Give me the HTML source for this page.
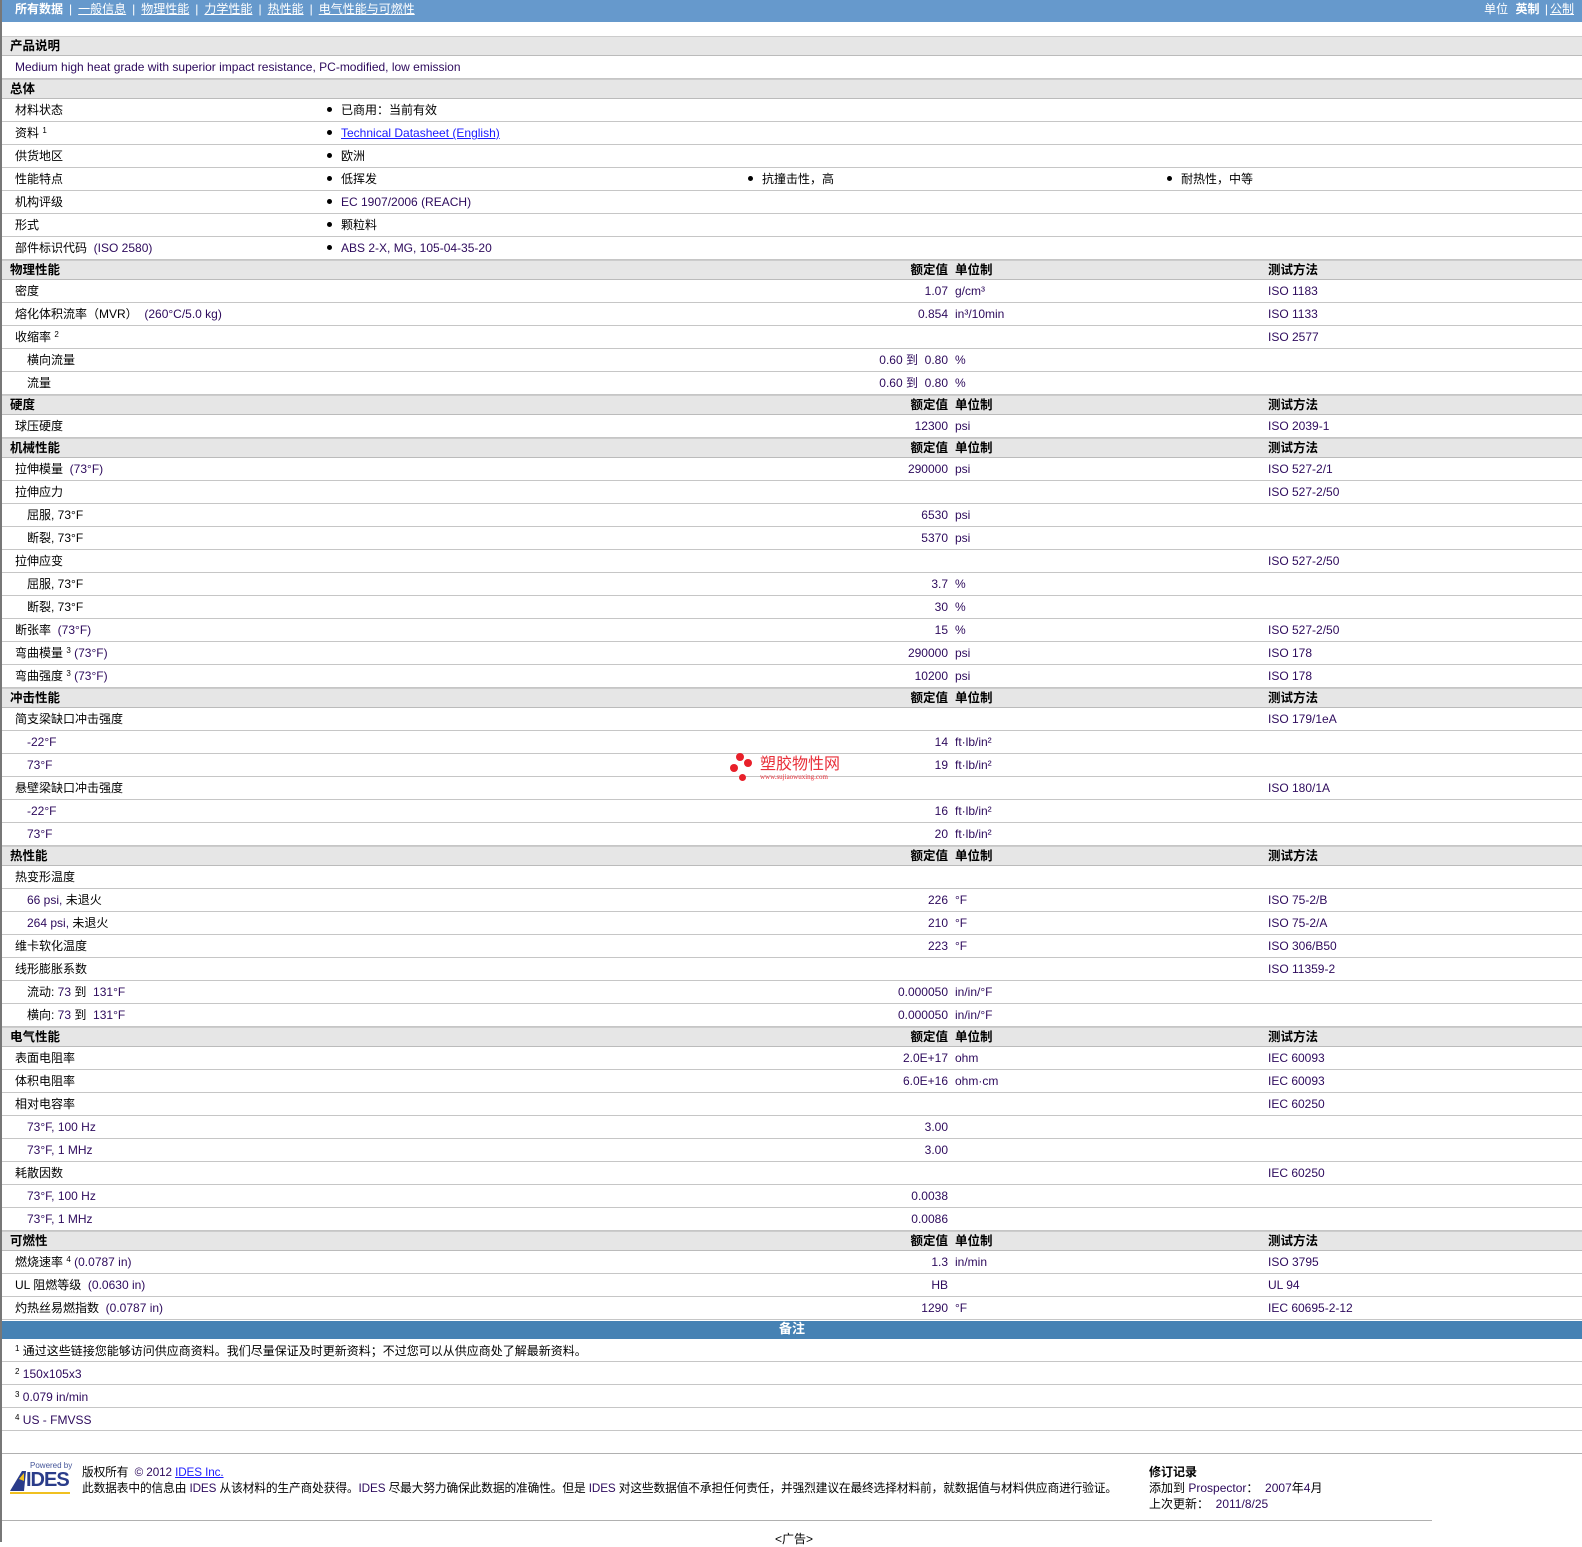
<!DOCTYPE html>
<html><head><meta charset="utf-8"><style>
*{margin:0;padding:0;box-sizing:border-box}
body{width:1582px;height:1542px;overflow:hidden;background:#fff;font-family:"Liberation Sans","Noto Sans CJK SC",sans-serif;font-size:12px;color:#000;position:relative}
#page{position:absolute;left:0;top:0;width:1582px;height:1542px;border-left:2px solid #777}
.top{height:22px;background:#6699cc;color:#fff;position:relative;line-height:19px;white-space:nowrap}
.top a{color:#fff;text-decoration:underline}
.top .sep{margin:0 6px}
.rows{position:absolute;top:36px;left:0;width:1580px}
.r,.h{position:relative;border-bottom:1px solid #c6c6c6;white-space:nowrap}
.r{height:23px}
.h{height:20px;background:#e6e6e6;font-weight:bold;border-top:1px solid #ccc;border-bottom:1px solid #bbb;font-size:12.5px}
.r>span,.h>span{position:absolute;top:4px;line-height:15px}
.h>span{top:2px}
.l{left:13px}.s{left:25px}
.hl{left:8px}
.v{left:700px;width:246px;text-align:right}
.u{left:953px}
.m{left:1266px}
.b1{left:325px}.b2{left:746px}.b3{left:1165px}
.dot{display:inline-block;width:5px;height:5px;border-radius:50%;background:#000;vertical-align:middle;margin-right:9px;position:relative;top:-1px}
.p{color:#2d0a5c}
sup{font-size:8px;vertical-align:top;position:relative;top:-3px}
.note{position:absolute;left:0;top:1321px;width:1580px;height:18px;background:#4682b4;color:#fff;font-weight:bold;text-align:center;line-height:15px;font-size:13px}
.nr{position:absolute;left:0;width:1580px;height:23px;border-bottom:1px solid #c6c6c6}
.nr>span{position:absolute;left:13px;top:5px;line-height:15px;white-space:nowrap}
a.lk{color:#1a1aff;text-decoration:underline}
</style></head><body><div id="page">
<div class="top">
<span style="position:absolute;left:13px"><b>所有数据</b><span class="sep">|</span><a>一般信息</a><span class="sep">|</span><a>物理性能</a><span class="sep">|</span><a>力学性能</a><span class="sep">|</span><a>热性能</a><span class="sep">|</span><a>电气性能与可燃性</a></span>
<span style="position:absolute;right:8px">单位 <b style="margin-left:4px">英制</b> <span style="margin:0 2px">|</span><a>公制</a></span>
</div>
<div class="rows">
<div class="h"><span class="hl">产品说明</span></div>
<div class="r"><span class="l p">Medium high heat grade with superior impact resistance, PC-modified, low emission</span></div>
<div class="h"><span class="hl">总体</span></div>
<div class="r"><span class="l">材料状态</span><span class="b1"><i class="dot"></i>已商用：当前有效</span></div>
<div class="r"><span class="l">资料 <sup>1</sup></span><span class="b1"><i class="dot"></i><a class="lk">Technical Datasheet (English)</a></span></div>
<div class="r"><span class="l">供货地区</span><span class="b1"><i class="dot"></i>欧洲</span></div>
<div class="r"><span class="l">性能特点</span><span class="b1"><i class="dot"></i>低挥发</span><span class="b2"><i class="dot"></i>抗撞击性，高</span><span class="b3"><i class="dot"></i>耐热性，中等</span></div>
<div class="r"><span class="l">机构评级</span><span class="b1 p"><i class="dot"></i>EC 1907/2006 (REACH)</span></div>
<div class="r"><span class="l">形式</span><span class="b1"><i class="dot"></i>颗粒料</span></div>
<div class="r"><span class="l">部件标识代码 <span class="p">&nbsp;(ISO 2580)</span></span><span class="b1 p"><i class="dot"></i>ABS 2-X, MG, 105-04-35-20</span></div>
<div class="h"><span class="hl">物理性能</span><span class="v">额定值</span><span class="u">单位制</span><span class="m">测试方法</span></div>
<div class="r"><span class="l">密度</span><span class="v p">1.07</span><span class="u p">g/cm³</span><span class="m p">ISO 1183</span></div>
<div class="r"><span class="l">熔化体积流率（MVR） <span class="p">&nbsp;(260°C/5.0 kg)</span></span><span class="v p">0.854</span><span class="u p">in³/10min</span><span class="m p">ISO 1133</span></div>
<div class="r"><span class="l">收缩率 <sup>2</sup></span><span class="m p">ISO 2577</span></div>
<div class="r"><span class="s">横向流量</span><span class="v p">0.60 到&nbsp; 0.80</span><span class="u p">%</span></div>
<div class="r"><span class="s">流量</span><span class="v p">0.60 到&nbsp; 0.80</span><span class="u p">%</span></div>
<div class="h"><span class="hl">硬度</span><span class="v">额定值</span><span class="u">单位制</span><span class="m">测试方法</span></div>
<div class="r"><span class="l">球压硬度</span><span class="v p">12300</span><span class="u p">psi</span><span class="m p">ISO 2039-1</span></div>
<div class="h"><span class="hl">机械性能</span><span class="v">额定值</span><span class="u">单位制</span><span class="m">测试方法</span></div>
<div class="r"><span class="l">拉伸模量 <span class="p">&nbsp;(73°F)</span></span><span class="v p">290000</span><span class="u p">psi</span><span class="m p">ISO 527-2/1</span></div>
<div class="r"><span class="l">拉伸应力</span><span class="m p">ISO 527-2/50</span></div>
<div class="r"><span class="s">屈服, 73°F</span><span class="v p">6530</span><span class="u p">psi</span></div>
<div class="r"><span class="s">断裂, 73°F</span><span class="v p">5370</span><span class="u p">psi</span></div>
<div class="r"><span class="l">拉伸应变</span><span class="m p">ISO 527-2/50</span></div>
<div class="r"><span class="s">屈服, 73°F</span><span class="v p">3.7</span><span class="u p">%</span></div>
<div class="r"><span class="s">断裂, 73°F</span><span class="v p">30</span><span class="u p">%</span></div>
<div class="r"><span class="l">断张率 <span class="p">&nbsp;(73°F)</span></span><span class="v p">15</span><span class="u p">%</span><span class="m p">ISO 527-2/50</span></div>
<div class="r"><span class="l">弯曲模量 <sup>3</sup> <span class="p">(73°F)</span></span><span class="v p">290000</span><span class="u p">psi</span><span class="m p">ISO 178</span></div>
<div class="r"><span class="l">弯曲强度 <sup>3</sup> <span class="p">(73°F)</span></span><span class="v p">10200</span><span class="u p">psi</span><span class="m p">ISO 178</span></div>
<div class="h"><span class="hl">冲击性能</span><span class="v">额定值</span><span class="u">单位制</span><span class="m">测试方法</span></div>
<div class="r"><span class="l">简支梁缺口冲击强度</span><span class="m p">ISO 179/1eA</span></div>
<div class="r"><span class="s p">-22°F</span><span class="v p">14</span><span class="u p">ft·lb/in²</span></div>
<div class="r"><span class="s p">73°F</span><span class="v p">19</span><span class="u p">ft·lb/in²</span></div>
<div class="r"><span class="l">悬壁梁缺口冲击强度</span><span class="m p">ISO 180/1A</span></div>
<div class="r"><span class="s p">-22°F</span><span class="v p">16</span><span class="u p">ft·lb/in²</span></div>
<div class="r"><span class="s p">73°F</span><span class="v p">20</span><span class="u p">ft·lb/in²</span></div>
<div class="h"><span class="hl">热性能</span><span class="v">额定值</span><span class="u">单位制</span><span class="m">测试方法</span></div>
<div class="r"><span class="l">热变形温度</span></div>
<div class="r"><span class="s"><span class="p">66 psi,</span> 未退火</span><span class="v p">226</span><span class="u p">°F</span><span class="m p">ISO 75-2/B</span></div>
<div class="r"><span class="s"><span class="p">264 psi,</span> 未退火</span><span class="v p">210</span><span class="u p">°F</span><span class="m p">ISO 75-2/A</span></div>
<div class="r"><span class="l">维卡软化温度</span><span class="v p">223</span><span class="u p">°F</span><span class="m p">ISO 306/B50</span></div>
<div class="r"><span class="l">线形膨胀系数</span><span class="m p">ISO 11359-2</span></div>
<div class="r"><span class="s">流动: <span class="p">73</span> 到&nbsp; <span class="p">131°F</span></span><span class="v p">0.000050</span><span class="u p">in/in/°F</span></div>
<div class="r"><span class="s">横向: <span class="p">73</span> 到&nbsp; <span class="p">131°F</span></span><span class="v p">0.000050</span><span class="u p">in/in/°F</span></div>
<div class="h"><span class="hl">电气性能</span><span class="v">额定值</span><span class="u">单位制</span><span class="m">测试方法</span></div>
<div class="r"><span class="l">表面电阻率</span><span class="v p">2.0E+17</span><span class="u p">ohm</span><span class="m p">IEC 60093</span></div>
<div class="r"><span class="l">体积电阻率</span><span class="v p">6.0E+16</span><span class="u p">ohm·cm</span><span class="m p">IEC 60093</span></div>
<div class="r"><span class="l">相对电容率</span><span class="m p">IEC 60250</span></div>
<div class="r"><span class="s p">73°F, 100 Hz</span><span class="v p">3.00</span></div>
<div class="r"><span class="s p">73°F, 1 MHz</span><span class="v p">3.00</span></div>
<div class="r"><span class="l">耗散因数</span><span class="m p">IEC 60250</span></div>
<div class="r"><span class="s p">73°F, 100 Hz</span><span class="v p">0.0038</span></div>
<div class="r"><span class="s p">73°F, 1 MHz</span><span class="v p">0.0086</span></div>
<div class="h"><span class="hl">可燃性</span><span class="v">额定值</span><span class="u">单位制</span><span class="m">测试方法</span></div>
<div class="r"><span class="l">燃烧速率 <sup>4</sup> <span class="p">(0.0787 in)</span></span><span class="v p">1.3</span><span class="u p">in/min</span><span class="m p">ISO 3795</span></div>
<div class="r"><span class="l">UL 阻燃等级 <span class="p">&nbsp;(0.0630 in)</span></span><span class="v p">HB</span><span class="m p">UL 94</span></div>
<div class="r"><span class="l">灼热丝易燃指数 <span class="p">&nbsp;(0.0787 in)</span></span><span class="v p">1290</span><span class="u p">°F</span><span class="m p">IEC 60695-2-12</span></div>
</div>
<div class="note">备注</div>
<div class="nr" style="top:1339px"><span><sup>1</sup> 通过这些链接您能够访问供应商资料。我们尽量保证及时更新资料；不过您可以从供应商处了解最新资料。</span></div>
<div class="nr" style="top:1362px"><span><sup>2</sup> <span class="p">150x105x3</span></span></div>
<div class="nr" style="top:1385px"><span><sup>3</sup> <span class="p">0.079 in/min</span></span></div>
<div class="nr" style="top:1408px"><span><sup>4</sup> <span class="p">US - FMVSS</span></span></div>
<div style="position:absolute;left:0;top:1453px;width:1580px;border-top:1px solid #b0b0b0"></div>
<div style="position:absolute;left:0;top:1520px;width:1430px;border-top:1px solid #b0b0b0"></div>
<!-- watermark -->
<div style="position:absolute;left:728px;top:753px;width:130px;height:36px">
<i style="position:absolute;left:6px;top:0;width:8px;height:8px;border-radius:50%;background:#e8202a"></i>
<i style="position:absolute;left:14px;top:6px;width:8px;height:8px;border-radius:50%;background:#e8202a"></i>
<i style="position:absolute;left:0;top:11px;width:8px;height:8px;border-radius:50%;background:#e8202a"></i>
<i style="position:absolute;left:9px;top:21px;width:7px;height:7px;border-radius:50%;background:#e8202a"></i>
<span style="position:absolute;left:30px;top:0;color:#e8303a;font-size:16px;line-height:18px;font-family:'Noto Sans CJK SC',sans-serif;white-space:nowrap">塑胶物性网</span>
<span style="position:absolute;left:30px;top:20px;color:#e8303a;font-size:7px;font-family:'Liberation Serif',serif;white-space:nowrap">www.sujiaowuxing.com</span>
</div>
<!-- footer -->
<div style="position:absolute;left:8px;top:1463px;width:62px;height:30px;white-space:nowrap">
<span style="position:absolute;left:20px;top:-2px;font-size:8px;color:#445599">Powered by</span>
<svg width="16" height="20" style="position:absolute;left:0;top:8px" viewBox="0 0 16 20"><polygon points="0,20 12,0 16,0 14,20" fill="#2a3c8a"/><polygon points="9,8 14,2 14,10" fill="#f0c020"/></svg>
<span style="position:absolute;left:16px;top:7px;font-size:20px;font-weight:bold;color:#2a3c8a;line-height:20px;letter-spacing:-1px">IDES</span>
<div style="position:absolute;left:0;top:29px;width:60px;height:2px;background:#f0c020"></div>
</div>
<div style="position:absolute;left:80px;top:1465px;line-height:16px;white-space:nowrap;font-size:11.7px;letter-spacing:-0.1px">版权所有 <span class="p">&nbsp;© 2012</span> <a class="lk">IDES Inc.</a><br>此数据表中的信息由 <span class="p">IDES</span> 从该材料的生产商处获得。<span class="p">IDES</span> 尽最大努力确保此数据的准确性。但是 <span class="p">IDES</span> 对这些数据值不承担任何责任，并强烈建议在最终选择材料前，就数据值与材料供应商进行验证。</div>
<div style="position:absolute;left:1147px;top:1464px;line-height:16px;white-space:nowrap"><b>修订记录</b><br>添加到 <span class="p">Prospector</span>： <span class="p">&nbsp;2007</span>年<span class="p">4</span>月<br>上次更新： <span class="p">&nbsp;2011/8/25</span></div>
<div style="position:absolute;left:773px;top:1530px;font-size:12px">&lt;广告&gt;</div>
</div></body></html>
